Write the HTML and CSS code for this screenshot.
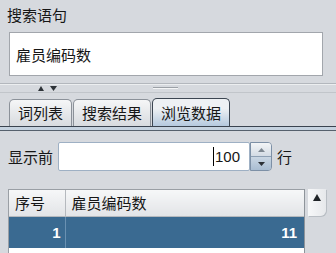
FILE: index.html
```html
<!DOCTYPE html>
<html lang="zh-CN">
<head>
<meta charset="UTF-8">
<title>搜索语句</title>
<link rel="stylesheet" href="styles.css">
</head>
<body>

<div class="query-label">搜索语句</div>
<div class="query-box">雇员编码数</div>

<div class="divider">
  <svg class="divider-arrows" width="21" height="5" viewBox="0 0 21 5">
    <polygon points="1,5 4,0 7,5" fill="#2e3338"/>
    <polygon points="13,0 20,0 16.5,5" fill="#2e3338"/>
  </svg>
  <span class="divider-grip"></span>
</div>

<div class="tabs">
  <div class="tab">词列表</div>
  <div class="tab">搜索结果</div>
  <div class="tab is-active">浏览数据</div>
</div>
<div class="tab-rule"></div>

<div class="panel">
  <div class="limit">
    <span>显示前</span>
    <div class="limit-field"><span class="caret"></span>100</div>
    <div class="spinner">
      <div class="spin-btn spin-up">
        <svg width="7" height="4" viewBox="0 0 7 4"><polygon points="0,4 3.5,0 7,4" fill="#7d8791"/></svg>
      </div>
      <div class="spin-btn spin-down">
        <svg width="7" height="4" viewBox="0 0 7 4"><polygon points="0,0 7,0 3.5,4" fill="#2b3036"/></svg>
      </div>
    </div>
    <span class="limit-unit">行</span>
  </div>

  <div class="grid">
    <div class="table-wrap">
      <table>
        <colgroup><col class="col-no"><col></colgroup>
        <thead>
          <tr><th>序号</th><th>雇员编码数</th></tr>
        </thead>
        <tbody>
          <tr class="is-selected"><td class="num">1</td><td class="num">11</td></tr>
        </tbody>
      </table>
    </div>
    <div class="vscroll">
      <div class="vscroll-btn">
        <svg width="8" height="7" viewBox="0 0 8 7"><polygon points="0,7 4,0 8,7" fill="#1f2327"/></svg>
      </div>
    </div>
  </div>
</div>

</body>
</html>
```

FILE: styles.css
```css
body {
  margin: 0;
  background: #d6d9de;
  font-family: "Noto Sans CJK SC", "Liberation Sans", sans-serif;
  font-size: 15px;
  line-height: 20px;
  color: #161616;
  overflow: hidden;
  height: 253px;
}
.query-label {
  padding: 5px 0 0 7px;
}
.query-box {
  margin: 7px 13px 0 9px;
  height: 44px;
  box-sizing: border-box;
  padding: 12px 6px 0;
  background: #fff;
  border: 1px solid #a2a6ac;
}
.divider {
  margin-top: 7px;
  height: 8px;
  border-top: 1px solid #b3b7bd;
  border-bottom: 1px solid #c1c5ca;
  box-shadow: inset 0 1px 0 #eceef0;
  display: flex;
  align-items: flex-start;
  padding-left: 37px;
}
.divider-arrows {
  margin-top: 2px;
}
.divider-grip {
  margin: 3px 0 0 95px;
  width: 25px;
  height: 0;
  border-top: 1px solid #9ca1a7;
  border-bottom: 1px solid #f4f5f6;
}
.tabs {
  display: flex;
  align-items: flex-end;
  gap: 1px;
  margin-top: 5px;
  padding-left: 9px;
}
.tab {
  height: 27px;
  box-sizing: border-box;
  padding: 3px 8px 0;
  border: 1px solid #8b9199;
  border-bottom: none;
  border-radius: 5px 5px 0 0;
  background: linear-gradient(#f5f6f7, #d8dbdf);
}
.tab.is-active {
  height: 28px;
  padding-top: 4px;
  border-color: #3c4652;
  background: linear-gradient(#eef1f4 35%, #b5c9de);
}
.tab-rule {
  height: 3px;
  border-top: 1px solid #3a434f;
  border-bottom: 1px solid #56616d;
  background: #c5d2df;
}
.panel {
  padding: 11px 0 0 8px;
}
.limit {
  display: flex;
  align-items: center;
  height: 29px;
}
.limit-field {
  margin-left: 5px;
  width: 192px;
  height: 29px;
  box-sizing: border-box;
  padding: 4px 9px 0 0;
  border: 1px solid #9eb0c4;
  border-radius: 2px;
  background: #fff;
  font-family: "Liberation Sans", sans-serif;
  text-align: right;
}
.caret {
  display: inline-block;
  width: 0;
  height: 19px;
  border-left: 1px solid #000;
  margin-right: 1px;
  vertical-align: -4px;
}
.spinner {
  width: 22px;
  height: 29px;
  box-sizing: border-box;
  display: flex;
  flex-direction: column;
  border: 1px solid #7d90a6;
  border-radius: 0 4px 4px 0;
  overflow: hidden;
}
.spin-btn {
  flex: 1;
  display: flex;
  align-items: center;
  justify-content: center;
}
.spin-up {
  background: linear-gradient(#f3f5f7, #d3dbe4);
  border-bottom: 1px solid #8ea0b4;
}
.spin-down {
  background: linear-gradient(#c9d6e3, #a9bdd2);
}
.limit-unit {
  margin-left: 5px;
}
.grid {
  display: flex;
  margin-top: 18px;
  height: 70px;
}
.table-wrap {
  width: 296px;
  box-sizing: border-box;
  background: #fff;
  border: 1px solid #9a9fa5;
  border-right: none;
  border-bottom: none;
}
table {
  width: 100%;
  border-collapse: collapse;
  table-layout: fixed;
}
.col-no {
  width: 56px;
}
th {
  height: 26px;
  padding: 0 6px;
  text-align: left;
  font-weight: normal;
  background: linear-gradient(#f6f7f8, #e2e4e7);
  border-bottom: 1px solid #b5b9be;
}
th:first-child {
  border-right: 1px solid #b5b9be;
}
td {
  height: 31px;
  padding: 0 7px 0 4px;
}
.num {
  text-align: right;
  font-family: "Liberation Sans", sans-serif;
  font-weight: bold;
}
.is-selected td {
  background: #3a6a91;
  color: #fff;
}
.is-selected td:first-child {
  border-right: 1px solid #6a91b2;
  padding-right: 4px;
}
.vscroll {
  width: 22px;
  border-left: 1px solid #8e949a;
  padding: 0 0 0 3px;
}
.vscroll-btn {
  width: 18px;
  height: 27px;
  box-sizing: border-box;
  padding-top: 5px;
  display: flex;
  justify-content: center;
  align-items: flex-start;
  background: linear-gradient(90deg, #f7f8f9, #e6e8eb);
  border-radius: 0 0 6px 0;
  box-shadow: 1px 1px 0 #b9bec4;
}
```
